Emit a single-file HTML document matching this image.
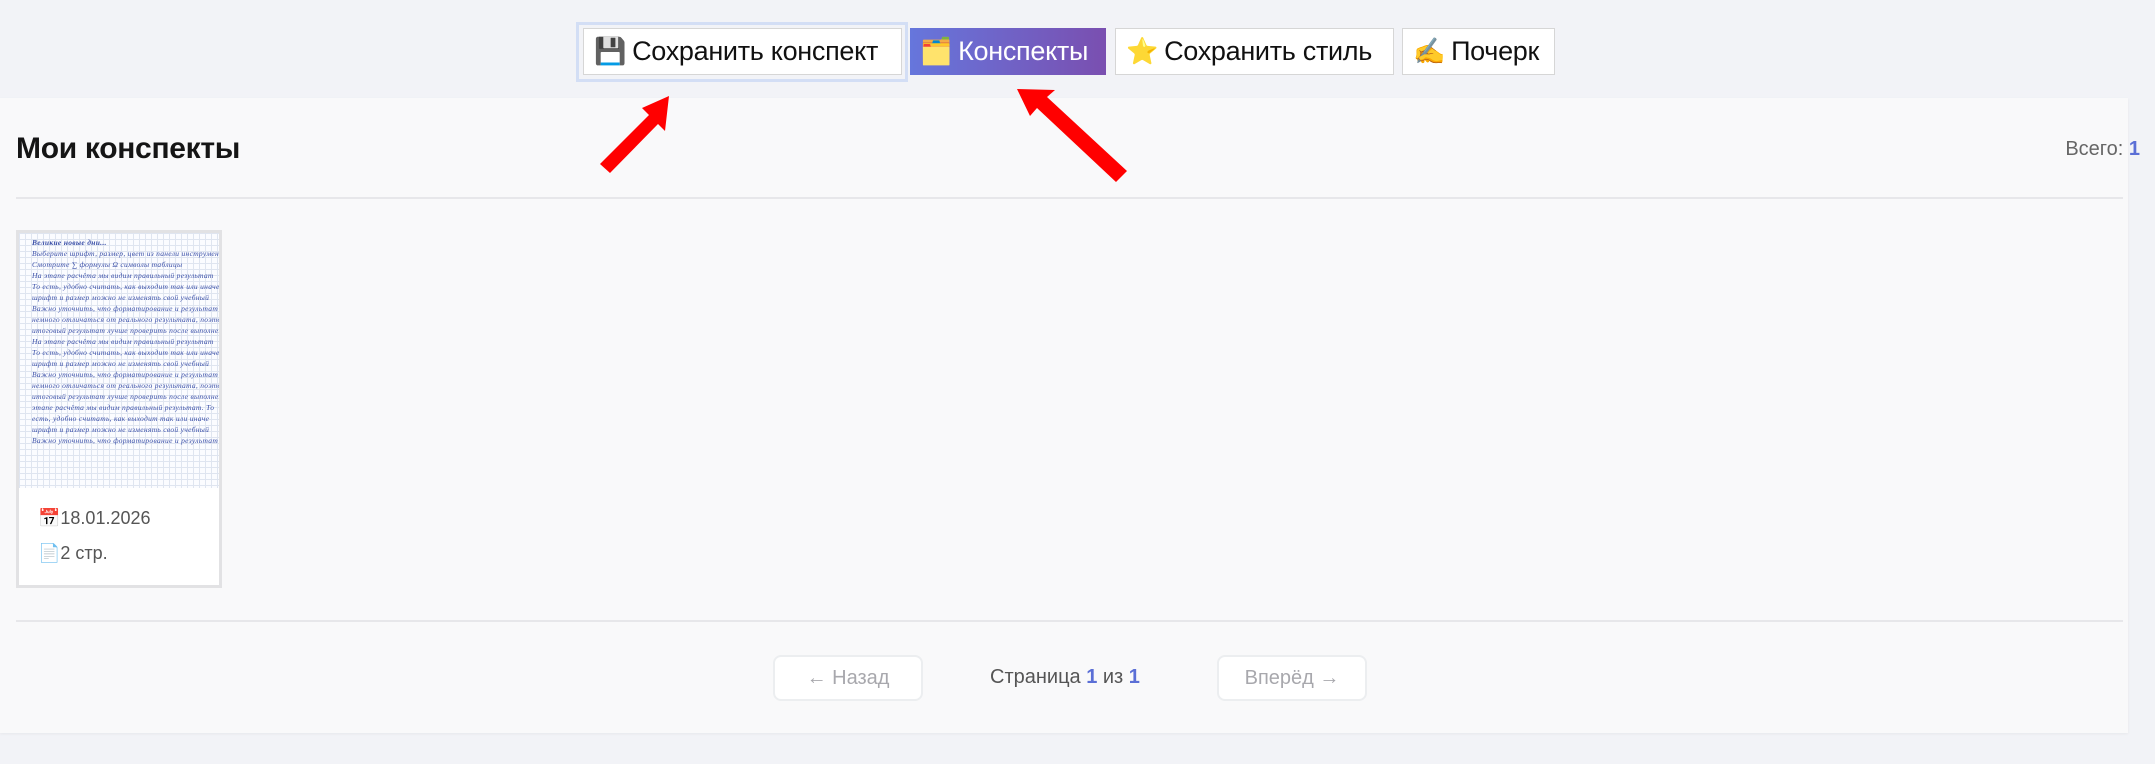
<!DOCTYPE html>
<html><head><meta charset="utf-8"><style>
body{margin:0;width:2155px;height:764px;background:#f2f3f7;font-family:"Liberation Sans",sans-serif;position:relative;overflow:hidden}
.btn{position:absolute;top:28px;height:47px;box-sizing:border-box;border:1px solid #d6d6d6;background:#fff;font-size:27px;color:#111;display:flex;align-items:center;padding-left:10px;white-space:nowrap;overflow:hidden;letter-spacing:-0.3px}
.ic{font-size:26px;margin-right:6px}
.panel{position:absolute;left:0;top:98px;width:2128px;height:635px;background:#f9f9fa;box-shadow:0 1px 3px rgba(0,0,0,.05)}
.hr{position:absolute;left:16px;width:2107px;height:2px;background:#e7e7ea}
.card{position:absolute;left:16px;top:230px;width:206px;height:358px;box-sizing:border-box;border:3px solid #e2e2e4;background:#fff}
.thumb{position:absolute;left:0;top:0;width:200px;height:255px;background-color:#fbfcff;background-image:linear-gradient(#dfe5f0 1px,transparent 1px),linear-gradient(90deg,#dfe5f0 1px,transparent 1px);background-size:6px 6px;overflow:hidden}
.thumb div{font-family:"Liberation Serif",serif;font-style:italic;font-size:7.5px;color:#3a4fa8;white-space:nowrap;line-height:11px;padding-left:13px;letter-spacing:0.3px}
.pbtn{position:absolute;top:655px;width:150px;height:46px;box-sizing:border-box;border:2px solid #eceef0;border-radius:8px;background:#fff;color:#a8a8ad;font-size:20px;display:flex;align-items:center;justify-content:center}
</style></head><body>
<div style="position:absolute;left:576px;top:22px;width:332px;height:60px;box-sizing:border-box;border:3px solid #d3def5"></div>
<div class="btn" style="left:583px;width:319px"><span class="ic">💾</span>Сохранить конспект</div>
<div class="btn" style="left:910px;width:196px;background:linear-gradient(90deg,#6676dc,#7a4fb0);color:#fff;border:none"><span class="ic">🗂️</span>Конспекты</div>
<div class="btn" style="left:1115px;width:279px"><span class="ic">⭐</span>Сохранить стиль</div>
<div class="btn" style="left:1402px;width:153px"><span class="ic">✍️</span>Почерк</div>
<div class="panel">
<div style="position:absolute;left:16px;top:34px;font-size:30px;font-weight:bold;color:#151515;letter-spacing:-0.3px">Мои конспекты</div>
<div style="position:absolute;right:-12px;top:40px;font-size:20px;color:#666">Всего: <b style="color:#5b6fd6;font-weight:bold">1</b></div>
<div class="hr" style="top:99px"></div>
<div class="hr" style="top:522px"></div>
</div>
<div class="card"><div class="thumb">
<div style="font-weight:bold;padding-top:4px">Великие новые дни...</div>
<div>Выберите шрифт, размер, цвет из панели инструментов</div>
<div>Смотрите ∑ формулы Ω символы таблицы</div>
<div>На этапе расчёта мы видим правильный результат</div>
<div>То есть, удобно считать, как выходит так или иначе</div>
<div>шрифт и размер можно не изменять свой учебный</div>
<div>Важно уточнить, что форматирование и результат может</div>
<div>немного отличаться от реального результата, поэтому</div>
<div>итоговый результат лучше проверить после выполнения</div>
<div>На этапе расчёта мы видим правильный результат</div>
<div>То есть, удобно считать, как выходит так или иначе</div>
<div>шрифт и размер можно не изменять свой учебный</div>
<div>Важно уточнить, что форматирование и результат может</div>
<div>немного отличаться от реального результата, поэтому</div>
<div>итоговый результат лучше проверить после выполнения</div>
<div>этапе расчёта мы видим правильный результат. То</div>
<div>есть, удобно считать, как выходит так или иначе</div>
<div>шрифт и размер можно не изменять свой учебный</div>
<div>Важно уточнить, что форматирование и результат может</div>
</div>
<div style="position:absolute;left:19px;top:275px;font-size:18px;color:#555">📅18.01.2026</div>
<div style="position:absolute;left:19px;top:310px;font-size:18px;color:#555">📄2 стр.</div>
</div>
<div class="pbtn" style="left:773px">← Назад</div>
<div style="position:absolute;left:990px;top:666px;font-size:20px;color:#555">Страница <b style="color:#5b6fd6">1</b> из <b style="color:#5b6fd6">1</b></div>
<div class="pbtn" style="left:1217px">Вперёд →</div>
<svg style="position:absolute;left:0;top:0" width="2155" height="764">
<g fill="#f00">
<polygon points="669,96 642,108 649,115 600,164 610,173 658,124 665,131"/>
<polygon points="1017,89 1030,116 1037,108 1116,182 1127,171 1047,97 1055,90"/>
</g></svg>
</body></html>
